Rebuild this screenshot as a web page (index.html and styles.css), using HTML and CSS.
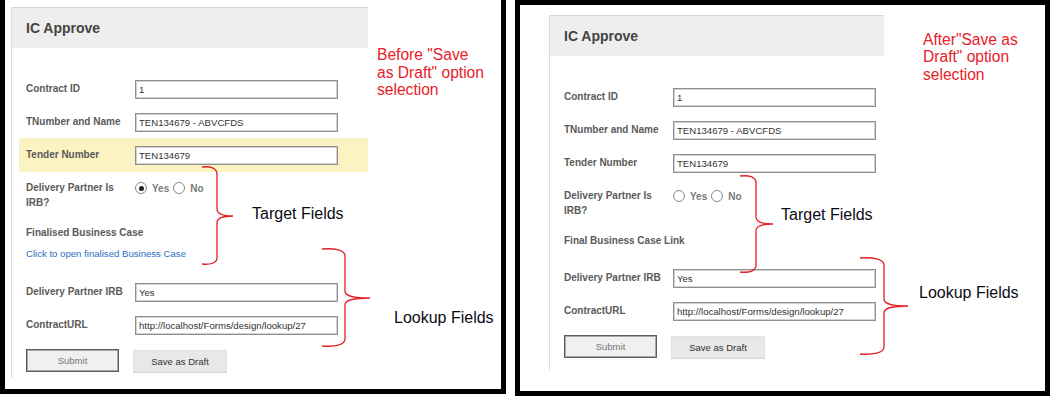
FILE: index.html
```html
<!DOCTYPE html>
<html lang="en">

<head>
    <meta charset="UTF-8">
    <meta name="viewport" content="width=device-width, initial-scale=1.0">
    <title>IC Approve - Save as Draft</title>
    <link rel="stylesheet" href="styles.css">
</head>

<body>
    <div class="shots">
        <!-- before "Save as Draft" -->
        <div class="shot shot-before">
            <div class="form">
                <div class="form-header">IC Approve</div>
                <div class="form-body">
                    <div class="field">
                        <label>Contract ID</label>
                        <input type="text" value="1" readonly>
                    </div>
                    <div class="field">
                        <label>TNumber and Name</label>
                        <input type="text" value="TEN134679 - ABVCFDS" readonly>
                    </div>
                    <div class="field field-highlight">
                        <label>Tender Number</label>
                        <input type="text" value="TEN134679" readonly>
                    </div>
                    <div class="field">
                        <label>Delivery Partner Is IRB?</label>
                        <div class="radios">
                            <span class="radio checked"></span><span class="radio-text">Yes</span>
                            <span class="radio"></span><span class="radio-text">No</span>
                        </div>
                    </div>
                    <div class="field-stack">
                        <div class="stack-label">Finalised Business Case</div>
                        <a href="#" class="case-link">Click to open finalised Business Case</a>
                    </div>
                    <div class="field">
                        <label>Delivery Partner IRB</label>
                        <input type="text" value="Yes" readonly>
                    </div>
                    <div class="field">
                        <label>ContractURL</label>
                        <input type="text" value="http://localhost/Forms/design/lookup/27" readonly>
                    </div>
                    <div class="actions">
                        <button class="btn btn-submit">Submit</button>
                        <button class="btn btn-draft">Save as Draft</button>
                    </div>
                </div>
            </div>
            <p class="note">Before "Save<br>as Draft" option<br>selection</p>

            <svg class="braces" width="496" height="389" viewBox="5 0 496 389">
                <path d="M202,167 C210,166 217,168 217,174 L217,209 C217,214 222,216 233,216 C222,216 217,218 217,223 L217,258 C217,263 210,265 202,264" />
                <path d="M322,249 C335,248 345,250 345,256 L345,291 C345,296 352,298 370,298 C352,298 345,300 345,305 L345,339 C345,345 335,347 322,346" />
            </svg>
            <span class="callout callout-target">Target Fields</span>
            <span class="callout callout-lookup">Lookup Fields</span>
        </div>

        <!-- after "Save as Draft" -->
        <div class="shot shot-after">
            <div class="form">
                <div class="form-header">IC Approve</div>
                <div class="form-body">
                    <div class="field">
                        <label>Contract ID</label>
                        <input type="text" value="1" readonly>
                    </div>
                    <div class="field">
                        <label>TNumber and Name</label>
                        <input type="text" value="TEN134679 - ABVCFDS" readonly>
                    </div>
                    <div class="field">
                        <label>Tender Number</label>
                        <input type="text" value="TEN134679" readonly>
                    </div>
                    <div class="field">
                        <label>Delivery Partner Is IRB?</label>
                        <div class="radios">
                            <span class="radio"></span><span class="radio-text">Yes</span>
                            <span class="radio"></span><span class="radio-text">No</span>
                        </div>
                    </div>
                    <div class="field-stack">
                        <div class="stack-label">Final Business Case Link</div>
                    </div>
                    <div class="field">
                        <label>Delivery Partner IRB</label>
                        <input type="text" value="Yes" readonly>
                    </div>
                    <div class="field">
                        <label>ContractURL</label>
                        <input type="text" value="http://localhost/Forms/design/lookup/27" readonly>
                    </div>
                    <div class="actions">
                        <button class="btn btn-submit">Submit</button>
                        <button class="btn btn-draft">Save as Draft</button>
                    </div>
                </div>
            </div>
            <p class="note">After"Save as<br>Draft" option<br>selection</p>

            <svg class="braces" width="525" height="386" viewBox="520 5 525 386">
                <path d="M740,176 C750,175 756,177 756,183 L756,217 C756,222 762,224 773,224 C762,224 756,226 756,231 L756,265 C756,271 750,273 740,272" />
                <path d="M860,258 C873,257 884,259 884,265 L884,299 C884,304 891,306 908,306 C891,306 884,308 884,313 L884,347 C884,353 873,355 860,354" />
            </svg>
            <span class="callout callout-target">Target Fields</span>
            <span class="callout callout-lookup">Lookup Fields</span>
        </div>
    </div>
</body>

</html>
```

FILE: styles.css
```css
* {
    box-sizing: border-box;
}

body {
    margin: 0;
    background: #fff;
    font-family: "Liberation Sans", Arial, sans-serif;
}

.shots {
    display: flex;
    align-items: flex-start;
    gap: 9px;
}

/* screenshot frames */
.shot {
    position: relative;
    display: flex;
    align-items: flex-start;
    border: 5px solid #000;
    background: #fff;
}

.shot-before {
    width: 506px;
    height: 394px;
    border-top: 0;
    padding: 7px 0 0 6px;
}

.shot-after {
    width: 535px;
    height: 396px;
    padding: 10px 0 0 29px;
}

/* form */
.form {
    flex: none;
    border-left: 1px solid #dcdcdc;
}

.shot-before .form {
    width: 357px;
}

.shot-after .form {
    width: 335px;
}

.form-header {
    height: 41px;
    line-height: 40px;
    padding-left: 14px;
    background: #eeeeee;
    border-top: 1px solid #d8d8d8;
    font-size: 14px;
    font-weight: bold;
    color: #444;
}

.form-body {
    padding: 32px 0 6px 14px;
}

.shot-after .form-body {
    padding-bottom: 12px;
}

.field {
    display: flex;
    align-items: flex-start;
    margin-bottom: 14px;
}

.field label,
.stack-label {
    width: 109px;
    flex: none;
    padding-top: 1px;
    line-height: 15px;
    font-size: 10px;
    font-weight: bold;
    color: #5a5a5a;
}

.stack-label {
    width: auto;
}

.field input {
    width: 203px;
    height: 19px;
    margin: 0;
    padding: 0 3px;
    border: 1px solid #8f8f8f;
    box-shadow: inset 0 0 0 1px #d2d2d2;
    background: #fff;
    font-family: "Liberation Sans", Arial, sans-serif;
    font-size: 9.6px;
    color: #333;
    outline: none;
}

.field-highlight {
    margin: -8px 0 7px -7px;
    padding: 8px 0 7px 7px;
    background: #fcf3c3;
}

/* radio group */
.radios {
    display: flex;
    align-items: center;
    padding-top: 3px;
    font-size: 10px;
    font-weight: bold;
    color: #7a7a7a;
}

.radio {
    display: inline-flex;
    align-items: center;
    justify-content: center;
    width: 12px;
    height: 12px;
    margin-right: 5px;
    border: 1px solid #8a8a8a;
    border-radius: 50%;
    background: #fff;
}

.radio.checked::after {
    content: "";
    width: 5px;
    height: 5px;
    border-radius: 50%;
    background: #222;
}

.radio-text {
    margin-right: 4px;
}

.field-stack {
    margin-bottom: 21px;
}

.field-stack .stack-label + .case-link {
    margin-top: 6px;
}

.case-link {
    display: block;
    line-height: 16px;
    font-size: 9.6px;
    color: #1f6fc5;
    text-decoration: none;
}

/* buttons */
.actions {
    display: flex;
    align-items: flex-start;
    gap: 14px;
}

.btn {
    height: 23px;
    padding: 0;
    font-family: "Liberation Sans", Arial, sans-serif;
    font-size: 9.5px;
    cursor: pointer;
}

.btn-submit {
    width: 93px;
    border: 1px solid #5c5c5c;
    box-shadow: inset 0 0 0 1px #a8a8a8;
    background: #f0f0f0;
    color: #777;
}

.btn-draft {
    width: 94px;
    height: 22px;
    margin-top: 1px;
    border: 1px solid #e2e2e2;
    box-shadow: 0 1px 0 #d6d6d6;
    background: #e8e8e8;
    color: #333;
}

/* red notes */
.note {
    margin: 39px 0 0 9px;
    font-size: 15.6px;
    line-height: 17.5px;
    color: #e8202a;
}

.shot-after .note {
    margin: 15.5px 0 0 39px;
}

/* annotation layer */
.braces {
    position: absolute;
    left: 0;
    top: 0;
    overflow: visible;
    pointer-events: none;
}

.braces path {
    fill: none;
    stroke: #e41f26;
    stroke-width: 1.3;
}

.callout {
    position: absolute;
    font-size: 16px;
    line-height: 18px;
    color: #0b0b16;
    white-space: nowrap;
}

.shot-before .callout-target { left: 247px; top: 205px; }
.shot-before .callout-lookup { left: 389px; top: 309px; }
.shot-after .callout-target { left: 261px; top: 201px; }
.shot-after .callout-lookup { left: 399px; top: 279px; }
```
